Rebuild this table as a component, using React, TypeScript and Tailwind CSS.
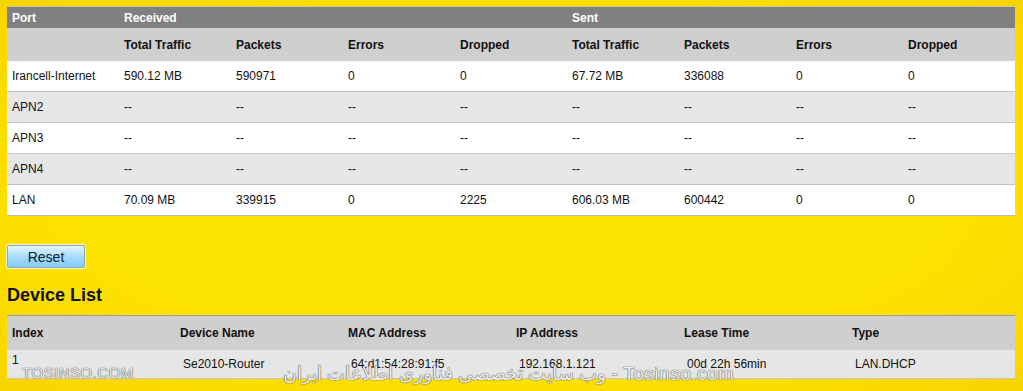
import React from "react";

const cols = ["Total Traffic", "Packets", "Errors", "Dropped", "Total Traffic", "Packets", "Errors", "Dropped"];
const rows: string[][] = [
  ["Irancell-Internet", "590.12 MB", "590971", "0", "0", "67.72 MB", "336088", "0", "0"],
  ["APN2", "--", "--", "--", "--", "--", "--", "--", "--"],
  ["APN3", "--", "--", "--", "--", "--", "--", "--", "--"],
  ["APN4", "--", "--", "--", "--", "--", "--", "--", "--"],
  ["LAN", "70.09 MB", "339915", "0", "2225", "606.03 MB", "600442", "0", "0"],
];
const devCols = ["Index", "Device Name", "MAC Address", "IP Address", "Lease Time", "Type"];
const devRow = ["1", "Se2010-Router", "64:d1:54:28:91:f5", "192.168.1.121", "00d 22h 56min", "LAN.DHCP"];

export default function App() {
  return (
    <div
      className="relative w-[1023px] h-[391px] overflow-hidden text-[12px] text-[#111]"
      style={{ fontFamily: '"Liberation Sans", Arial, sans-serif' }}
    >
      <div className="absolute inset-0 bg-[radial-gradient(ellipse_at_center,#fde300_60%,#f8d400_100%)]" />
      <div className="relative pt-[6px] px-[7px]">
        <div className="w-[1008px] border-t border-[#c8c8a0]">
          <div className="grid grid-cols-[repeat(9,112px)] h-[21px] bg-[#808080] text-white font-bold items-center">
            <div className="pl-[5px]">Port</div>
            <div className="pl-[5px] col-span-4">Received</div>
            <div className="pl-[5px] col-span-4">Sent</div>
          </div>
          <div className="grid grid-cols-[repeat(9,112px)] h-[33px] bg-[#cfcfcf] font-bold items-center">
            <div />
            {cols.map((c, i) => (
              <div key={i} className="pl-[5px]">{c}</div>
            ))}
          </div>
          {rows.map((r, ri) => (
            <div
              key={ri}
              className={`grid grid-cols-[repeat(9,112px)] h-[31px] items-center ${ri % 2 === 0 ? "bg-white" : "bg-[#e6e6e6]"} ${ri < rows.length - 1 ? "border-b border-[#c4c4c4]" : "border-b border-[#bdbdbd]"}`}
            >
              {r.map((c, ci) => (
                <div key={ci} className="pl-[5px]">{c}</div>
              ))}
            </div>
          ))}
        </div>

        <div className="mt-[29px]">
          <button className="w-[78px] h-[23px] rounded-[2px] border border-[#8aa8c0] bg-[linear-gradient(#e4f6ff,#a8dcfa_50%,#84cbf3)] text-[14px] text-[#0b1b2b] leading-none shadow-[0_0_0_1px_#f4f4d0]">
            Reset
          </button>
        </div>

        <div className="mt-[16px] text-[18px] font-bold text-[#111] leading-[22px]">Device List</div>

        <div className="mt-[9px] w-[1008px] border-t border-[#9a9a9a]">
          <div className="grid grid-cols-[repeat(6,168px)] h-[34px] bg-[#cfcfcf] font-bold items-center">
            {devCols.map((c, i) => (
              <div key={i} className="pl-[5px]">{c}</div>
            ))}
          </div>
          <div className="grid grid-cols-[repeat(6,168px)] h-[29px] bg-[#e6e6e6] items-center border-b border-[#c4c4c4]">
            {devRow.map((c, i) => (
              <div key={i} className={i === 0 ? "pl-[5px] -mt-[8px]" : "pl-[8px]"}>{c}</div>
            ))}
          </div>
        </div>
      </div>

      <div
        className="absolute left-[22px] top-[362px] text-[15px] text-[#e8e8e8] tracking-[0.5px]"
        style={{ textShadow: "0 0 1px #555, 0 0 1px #555" }}
      >
        TOSINSO.COM
      </div>
      <div
        className="absolute left-[283px] top-[360px] text-[19px] text-[#eeeeee] tracking-[0.5px] whitespace-nowrap"
        style={{ textShadow: "0 0 1px #444, 0 0 1px #444", fontFamily: '"Liberation Sans", "Noto Sans", sans-serif' }}
      >
        وب سایت تخصصی فناوری اطلاعات ایران - Tosinso.com
      </div>
    </div>
  );
}
